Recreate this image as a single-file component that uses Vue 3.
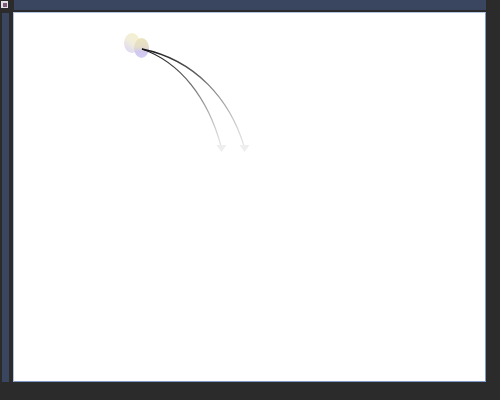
<script setup>
</script>

<template>
  <div class="window">
    <div class="corner">
      <div class="app-icon"><div class="app-icon-inner"></div></div>
      <div class="side-strip"></div>
    </div>
    <div class="main">
      <div class="top-strip"></div>
      <div class="canvas">
        <svg class="drawing" width="471" height="368" viewBox="14 13 471 368">
          <defs>
            <linearGradient id="fadeA" gradientUnits="userSpaceOnUse" x1="142" y1="49" x2="222" y2="148">
              <stop offset="0" stop-color="#111111" />
              <stop offset="0.45" stop-color="#6a6a6a" />
              <stop offset="0.8" stop-color="#c4c4c4" />
              <stop offset="1" stop-color="#eaeaea" />
            </linearGradient>
            <linearGradient id="fadeB" gradientUnits="userSpaceOnUse" x1="142" y1="49" x2="245" y2="148">
              <stop offset="0" stop-color="#111111" />
              <stop offset="0.45" stop-color="#6a6a6a" />
              <stop offset="0.8" stop-color="#c4c4c4" />
              <stop offset="1" stop-color="#eaeaea" />
            </linearGradient>
            <linearGradient id="orbBack" x1="0.8" y1="0" x2="0.2" y2="1">
              <stop offset="0" stop-color="#f6f1cc" />
              <stop offset="0.5" stop-color="#f1eddc" />
              <stop offset="1" stop-color="#dcd6f6" />
            </linearGradient>
            <linearGradient id="orbFront" x1="0.5" y1="0" x2="0.5" y2="1">
              <stop offset="0" stop-color="#ebe4bd" />
              <stop offset="0.45" stop-color="#e4dcc8" />
              <stop offset="0.7" stop-color="#d0c8f0" />
              <stop offset="1" stop-color="#d6cff4" />
            </linearGradient>
            <filter id="soft" x="-30%" y="-30%" width="160%" height="160%">
              <feGaussianBlur stdDeviation="0.6" />
            </filter>
            <filter id="softLine" x="-10%" y="-10%" width="120%" height="120%">
              <feGaussianBlur stdDeviation="0.3" />
            </filter>
            <filter id="softHead" x="-30%" y="-30%" width="160%" height="160%">
              <feGaussianBlur stdDeviation="0.5" />
            </filter>
          </defs>
          <g filter="url(#soft)">
            <ellipse cx="132" cy="43" rx="8" ry="10" fill="url(#orbBack)" />
            <ellipse cx="141.5" cy="48" rx="7.5" ry="10" fill="url(#orbFront)" />
          </g>
          <g filter="url(#softLine)">
            <path d="M142 49 C180 62 208 98 221 146" fill="none" stroke="url(#fadeA)" stroke-width="1.3" />
            <path d="M142 49 C196 60 230 100 244 146" fill="none" stroke="url(#fadeB)" stroke-width="1.3" />
          </g>
          <g filter="url(#softHead)">
            <polygon points="216.5,145 226.5,145 221.5,152" fill="#eeeeee" />
            <polygon points="239.5,145 249.5,145 244.5,152" fill="#eeeeee" />
          </g>
        </svg>
      </div>
    </div>
  </div>
</template>

<style>
body { margin: 0; background: #2b2b2b; }
</style>

<style scoped>
.window {
  width: 500px;
  height: 400px;
  display: flex;
  background: #2b2b2b;
  overflow: hidden;
}
.corner {
  width: 13px;
  flex: none;
  display: flex;
  flex-direction: column;
  align-items: flex-start;
  padding: 1px 0 0 1px;
  box-sizing: border-box;
}
.app-icon {
  width: 7px;
  height: 7px;
  background: #e4dfe2;
  display: flex;
  align-items: center;
  justify-content: center;
}
.app-icon-inner {
  width: 4px;
  height: 4px;
  background: #7a5a78;
}
.side-strip {
  width: 7px;
  height: 369px;
  margin: 5px 0 0 1px;
  background: #3a4660;
}
.main {
  width: 473px;
  flex: none;
  display: flex;
  flex-direction: column;
}
.top-strip {
  height: 10px;
  margin-left: 1px;
  background: #3a4560;
}
.canvas {
  margin-top: 2px;
  width: 473px;
  height: 370px;
  box-sizing: border-box;
  background: #ffffff;
  border: 1px solid #7f9bc9;
  border-left-color: #b4c4e0;
  border-top-color: #b4c4e0;
}
.drawing {
  display: block;
}
</style>
